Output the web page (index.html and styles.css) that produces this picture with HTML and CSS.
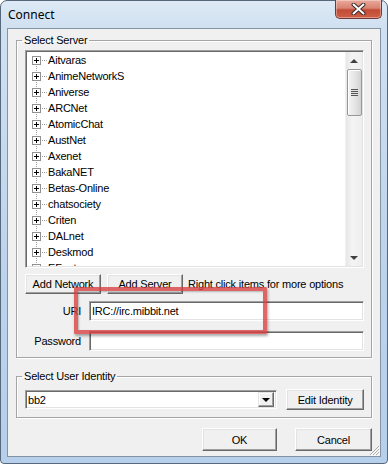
FILE: index.html
```html
<!DOCTYPE html>
<html lang="en">
<head>
  <meta charset="UTF-8" />
  <title>Connect</title>
  <link rel="stylesheet" href="styles.css">
</head>
<body>
  <div class="window">
    <!-- Title bar -->
    <div class="titlebar">
      <span class="title">Connect</span>
      <button class="close" aria-label="Close">
        <svg width="15" height="12" viewBox="0 0 15 12">
          <path d="M2.5 1.5l10 9M12.5 1.5l-10 9" stroke="#3b2a2a" stroke-width="4" stroke-linecap="round" />
          <path d="M2.5 1.5l10 9M12.5 1.5l-10 9" stroke="#fff" stroke-width="2" stroke-linecap="round" />
        </svg>
      </button>
    </div>

    <div class="client">
      <fieldset class="group server-group">
        <legend>Select Server</legend>

        <div class="listbox">
          <ul class="tree">
            <li><span class="exp"></span><span class="branch"></span>Aitvaras</li>
            <li><span class="exp"></span><span class="branch"></span>AnimeNetworkS</li>
            <li><span class="exp"></span><span class="branch"></span>Aniverse</li>
            <li><span class="exp"></span><span class="branch"></span>ARCNet</li>
            <li><span class="exp"></span><span class="branch"></span>AtomicChat</li>
            <li><span class="exp"></span><span class="branch"></span>AustNet</li>
            <li><span class="exp"></span><span class="branch"></span>Axenet</li>
            <li><span class="exp"></span><span class="branch"></span>BakaNET</li>
            <li><span class="exp"></span><span class="branch"></span>Betas-Online</li>
            <li><span class="exp"></span><span class="branch"></span>chatsociety</li>
            <li><span class="exp"></span><span class="branch"></span>Criten</li>
            <li><span class="exp"></span><span class="branch"></span>DALnet</li>
            <li><span class="exp"></span><span class="branch"></span>Deskmod</li>
            <li><span class="exp"></span><span class="branch"></span>EFnet</li>
          </ul>
          <div class="vscroll">
            <div class="arrow up"></div>
            <div class="thumb"><span class="grip"></span></div>
            <div class="track"></div>
            <div class="arrow down"></div>
          </div>
        </div>

        <div class="toolrow">
          <button class="btn">Add Network</button>
          <button class="btn">Add Server</button>
          <span class="hint">Right click items for more options</span>
        </div>

        <div class="field first">
          <label for="uri">URI</label>
          <input id="uri" type="text" value="IRC://irc.mibbit.net" />
        </div>
        <div class="field">
          <label for="pass">Password</label>
          <input id="pass" type="password" />
        </div>
      </fieldset>

      <fieldset class="group identity-group">
        <legend>Select User Identity</legend>
        <div class="identity-row">
          <div class="combo">
            <span class="combo-text">bb2</span>
            <span class="drop"></span>
          </div>
          <button class="btn edit-btn">Edit Identity</button>
        </div>
      </fieldset>

      <div class="actions">
        <button class="btn ok">OK</button>
        <button class="btn cancel">Cancel</button>
      </div>

      <!-- red highlight drawn over the dialog -->
      <div class="highlight"></div>

      <svg class="grip-corner" width="11" height="11" viewBox="0 0 11 11">
        <path d="M10 1L1 10M10 4L4 10M10 7L7 10" stroke="#a9a9a9" stroke-width="1" />
        <path d="M11 2L2 11M11 5L5 11M11 8L8 11" stroke="#fff" stroke-width="1" />
      </svg>
    </div>
  </div>
</body>
</html>
```

FILE: styles.css
```css
* {
  box-sizing: border-box;
}

html,
body {
  margin: 0;
}

body {
  width: 388px;
  height: 464px;
  overflow: hidden;
  background: #fff;
  font-family: "Liberation Sans", Arial, sans-serif;
  font-size: 11px;
  letter-spacing: -0.2px;
  color: #000;
}

.window {
  height: 464px;
  display: flex;
  flex-direction: column;
  padding: 0 6px 6px 6px;
  border: 1px solid #56687b;
  border-radius: 7px 7px 4px 4px;
  background: linear-gradient(to bottom, #dde9f5 0, #cfe0f1 28px, #bcd3ec 60%, #b6cfea 100%);
}

.titlebar {
  height: 27px;
  display: flex;
  justify-content: space-between;
  align-items: flex-start;
}

.title {
  font-family: "Noto Sans", "Open Sans", sans-serif;
  font-size: 12px;
  letter-spacing: 0;
  line-height: 16px;
  margin: 6px 0 0 1px;
  color: #000;
}

.close {
  width: 47px;
  height: 19px;
  margin: -1px -1px 0 0;
  padding: 0;
  border: 1px solid #6e3a36;
  border-top: none;
  border-radius: 0 0 5px 5px;
  background: linear-gradient(to bottom, #e9a99b 0%, #d98372 45%, #c24b36 55%, #cf5f45 100%);
  box-shadow: inset 0 0 0 1px rgba(255, 255, 255, 0.35);
  display: flex;
  align-items: center;
  justify-content: center;
}

.close svg {
  display: block;
}

.client {
  flex: 1;
  position: relative;
  display: flex;
  flex-direction: column;
  border: 1px solid #8594a3;
  background: #f0f0f0;
}

/* group boxes */
.group {
  margin: 4px 8px 0 8px;
  padding: 0 7px 6px 8px;
  border: 1px solid #a5a5a5;
  box-shadow: inset 1px 1px 0 #fff, 1px 1px 0 #fff;
  min-width: 0;
}

.group legend {
  margin-left: -3px;
  padding: 0 2px;
  line-height: 14px;
}

.identity-group {
  margin-top: 11px;
  padding-bottom: 7px;
}

/* server tree */
.listbox {
  margin-top: 3px;
  height: 218px;
  display: flex;
  border: 1px solid;
  border-color: #a0a0a0 #fff #fff #a0a0a0;
  box-shadow: inset 1px 1px 0 #696969, inset -1px -1px 0 #e3e3e3;
  background: #fff;
  padding: 1px;
}

.tree {
  list-style: none;
  margin: 0;
  padding: 0;
  flex: 1;
  overflow: hidden;
}

.tree li {
  height: 16px;
  line-height: 16px;
  display: flex;
  align-items: flex-start;
  padding-left: 5px;
  white-space: nowrap;
  background: linear-gradient(#a0a0a0 50%, transparent 50%) 9px 0 / 1px 2px repeat-y;
}

.tree li:first-child {
  background:
    linear-gradient(#fff, #fff) 9px 0 / 1px 8px no-repeat,
    linear-gradient(#a0a0a0 50%, transparent 50%) 9px 0 / 1px 2px repeat-y;
}

.exp {
  width: 9px;
  height: 9px;
  margin-top: 4px;
  flex: none;
  border: 1px solid #919191;
  background:
    linear-gradient(#000, #000) 1px 3px / 5px 1px no-repeat,
    linear-gradient(#000, #000) 3px 1px / 1px 5px no-repeat,
    #fff;
}

.branch {
  width: 6px;
  height: 1px;
  margin: 8px 1px 0 0;
  flex: none;
  background: linear-gradient(to right, #a0a0a0 50%, transparent 50%) 1px 0 / 2px 1px repeat-x;
}

/* scroll bar */
.vscroll {
  width: 17px;
  display: flex;
  flex-direction: column;
  background: linear-gradient(to right, #e7e7e7, #f4f4f4 40%, #eeeeee);
  border-left: 1px solid #f0f0f0;
}

.arrow {
  height: 17px;
  display: flex;
  align-items: center;
  justify-content: center;
}

.arrow::before {
  content: "";
  border-left: 4px solid transparent;
  border-right: 4px solid transparent;
}

.arrow.up::before {
  border-bottom: 4px solid #404040;
}

.arrow.down::before {
  border-top: 4px solid #404040;
}

.thumb {
  height: 47px;
  margin: 0 0 0 1px;
  border: 1px solid #979797;
  border-radius: 2px;
  background: linear-gradient(to right, #f3f3f3, #e6e6e6 50%, #d2d2d2);
  box-shadow: inset 1px 1px 0 #fff;
  display: flex;
  align-items: center;
  justify-content: center;
}

.grip {
  width: 7px;
  height: 7px;
  background: repeating-linear-gradient(to bottom, #555 0, #555 1px, #e0e0e0 1px, #e0e0e0 2px);
}

.track {
  flex: 1;
}

/* buttons */
.btn {
  height: 20px;
  padding: 0 4px;
  font-family: "Liberation Sans", Arial, sans-serif;
  font-size: 11px;
  letter-spacing: -0.2px;
  color: #000;
  background: #f0f0f0;
  border: 1px solid;
  border-color: #fff #696969 #696969 #fff;
  box-shadow: inset -1px -1px 0 #a0a0a0, inset 1px 1px 0 #e3e3e3;
}

.toolrow {
  margin-top: 6px;
  display: flex;
  align-items: center;
  gap: 6px;
}

.toolrow .btn {
  width: 76px;
}

.hint {
  margin-left: -1px;
  white-space: nowrap;
}

/* URI / password */
.field {
  margin-top: 10px;
  display: flex;
  align-items: center;
  gap: 8px;
}

.field.first {
  margin-top: 7px;
}

.field label {
  width: 56px;
  text-align: right;
}

.field input {
  width: 275px;
  height: 20px;
  padding: 0 2px;
  font-family: "Liberation Sans", Arial, sans-serif;
  font-size: 11px;
  letter-spacing: -0.2px;
  color: #000;
  background: #fff;
  border: 1px solid;
  border-color: #a0a0a0 #fff #fff #a0a0a0;
  box-shadow: inset 1px 1px 0 #696969, inset -1px -1px 0 #e3e3e3;
  outline: none;
}

/* identity */
.identity-row {
  margin-top: 6px;
  display: flex;
  align-items: center;
  gap: 9px;
}

.combo {
  width: 253px;
  height: 19px;
  display: flex;
  align-items: center;
  justify-content: space-between;
  background: #fff;
  border: 1px solid;
  border-color: #a0a0a0 #fff #fff #a0a0a0;
  box-shadow: inset 1px 1px 0 #696969, inset -1px -1px 0 #e3e3e3;
  padding: 1px 2px 1px 2px;
}

.drop {
  width: 16px;
  height: 15px;
  display: flex;
  align-items: center;
  justify-content: center;
  background: #f0f0f0;
  border: 1px solid;
  border-color: #e3e3e3 #696969 #696969 #e3e3e3;
  box-shadow: inset -1px -1px 0 #a0a0a0, inset 1px 1px 0 #fff;
}

.drop::before {
  content: "";
  border-left: 4px solid transparent;
  border-right: 4px solid transparent;
  border-top: 4px solid #000;
}

.edit-btn {
  width: 78px;
  height: 21px;
}

/* dialog buttons */
.actions {
  margin: 10px 8px 0 0;
  display: flex;
  justify-content: flex-end;
  gap: 18px;
}

.actions .btn {
  height: 23px;
}

.ok {
  width: 75px;
}

.cancel {
  width: 77px;
}

.highlight {
  position: absolute;
  left: 66px;
  top: 258px;
  width: 193px;
  height: 47px;
  border: 4px solid rgba(216, 62, 62, 0.78);
  border-radius: 1px;
  box-shadow: 1px 2px 3px rgba(0, 0, 0, 0.35), inset 1px 1px 2px rgba(0, 0, 0, 0.25);
  pointer-events: none;
}

.grip-corner {
  position: absolute;
  right: 0;
  bottom: 0;
}
```
